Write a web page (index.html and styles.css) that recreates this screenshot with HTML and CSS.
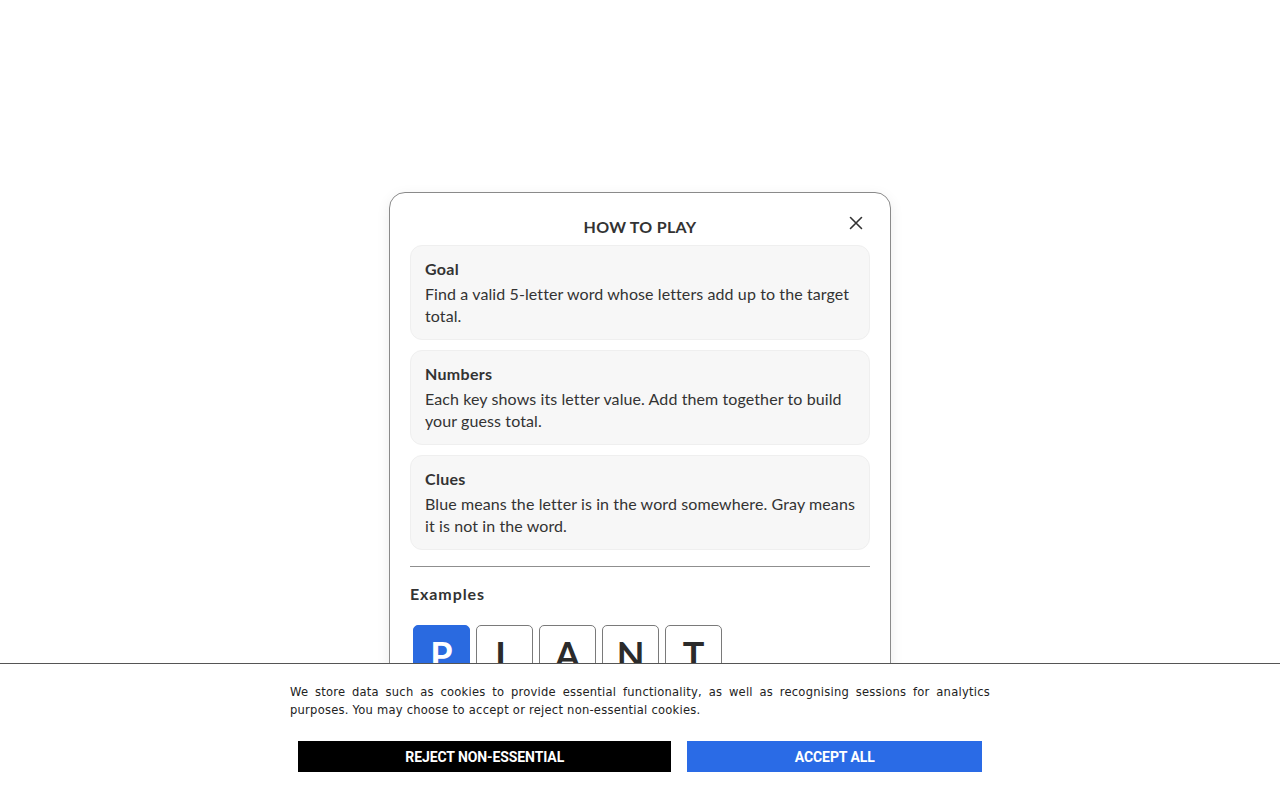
FILE: index.html
```html
<!doctype html>
<html lang="en">
  <head>
    <meta charset="UTF-8" />
    <meta name="viewport" content="width=device-width, initial-scale=1.0" />
    <title>How to play</title>
    <link rel="stylesheet" href="styles.css">
  </head>
  <body>
    <div class="modal">
      <div class="modalHeader">
        <h2 class="title">HOW TO PLAY</h2>
        <button class="close" aria-label="Close">
          <svg width="14" height="14" viewBox="0 0 14 14">
            <path d="M1.5 1.5 L12.5 12.5 M12.5 1.5 L1.5 12.5" stroke="#333" stroke-width="1.6" stroke-linecap="round" fill="none" />
          </svg>
        </button>
      </div>
      <div class="card">
        <div class="cardTitle">Goal</div>
        <p class="cardText">Find a valid 5-letter word whose letters add up to the target total.</p>
      </div>
      <div class="card">
        <div class="cardTitle">Numbers</div>
        <p class="cardText">Each key shows its letter value. Add them together to build your guess total.</p>
      </div>
      <div class="card">
        <div class="cardTitle">Clues</div>
        <p class="cardText">Blue means the letter is in the word somewhere. Gray means it is not in the word.</p>
      </div>
      <hr class="divider" />
      <div class="examplesTitle">Examples</div>
      <div class="tiles">
        <div class="tile blue">P</div>
        <div class="tile">L</div>
        <div class="tile">A</div>
        <div class="tile">N</div>
        <div class="tile">T</div>
      </div>
      <p class="exampleText">P is in the word somewhere.</p>
      <div class="tiles">
        <div class="tile">C</div>
        <div class="tile">R</div>
        <div class="tile gray">A</div>
        <div class="tile">N</div>
        <div class="tile">E</div>
      </div>
      <p class="exampleText">A is not in the word.</p>
    </div>

    <div class="cookies">
      <p class="cookieText">We store data such as cookies to provide essential functionality, as well as recognising sessions for analytics purposes. You may choose to accept or reject non-essential cookies.</p>
      <div class="cookieButtons">
        <button class="cookieBtn reject">REJECT NON-ESSENTIAL</button>
        <button class="cookieBtn accept">ACCEPT ALL</button>
      </div>
    </div>
  </body>
</html>
```

FILE: styles.css
```css
body {
  margin: 0;
  padding: 192px 0 40px;
  display: flex;
  flex-direction: column;
  align-items: center;
  background-color: #ffffff;
  font-family: "Lato", "Noto Sans", sans-serif;
  color: #333333;
}

.modal {
  width: 460px;
  padding: 20px;
  border: 1px solid #8a8a8a;
  border-radius: 16px;
  background: #ffffff;
  box-shadow: 0 4px 14px rgba(0, 0, 0, 0.08);
  display: flex;
  flex-direction: column;
}

.modalHeader {
  position: relative;
  height: 28px;
  margin-bottom: 4px;
}

.title {
  margin: 0;
  font-size: 16px;
  line-height: 28px;
  font-weight: 700;
  text-align: center;
  letter-spacing: 0.3px;
}

.close {
  position: absolute;
  right: 6px;
  top: 2px;
  width: 16px;
  height: 16px;
  padding: 0;
  border: none;
  background: none;
  display: flex;
  align-items: center;
  justify-content: center;
  cursor: pointer;
}

.card {
  background: #f7f7f7;
  border: 1px solid #efefef;
  border-radius: 12px;
  padding: 12px 14px;
}

.card + .card {
  margin-top: 10px;
}

.cardTitle {
  font-size: 16px;
  line-height: 22px;
  font-weight: 700;
  letter-spacing: 0.3px;
}

.cardText {
  margin: 3px 0 0;
  font-size: 16px;
  line-height: 22px;
  letter-spacing: 0.1px;
}

.divider {
  width: 100%;
  margin: 16px 0 0;
  border: none;
  border-top: 1px solid #8f8f8f;
}

.examplesTitle {
  margin-top: 16px;
  font-size: 16px;
  line-height: 22px;
  font-weight: 700;
  letter-spacing: 0.9px;
}

.tiles {
  display: flex;
  gap: 6px;
  margin: 20px 0 0 3px;
}

.tile {
  width: 55px;
  height: 55px;
  border: 1px solid #7a7a7a;
  border-radius: 5px;
  display: flex;
  align-items: center;
  justify-content: center;
  font-size: 36px;
  font-weight: 700;
  color: #2b2b2b;
}

.tile.blue {
  background: #2a6ae0;
  border-color: #2a6ae0;
  color: #ffffff;
}

.tile.gray {
  background: #8c8c8c;
  border-color: #8c8c8c;
  color: #ffffff;
}

.exampleText {
  margin: 10px 0 0;
  font-size: 16px;
  line-height: 22px;
}

.cookies {
  position: fixed;
  left: 0;
  right: 0;
  bottom: 0;
  height: 136px;
  background: #ffffff;
  border-top: 1px solid #555555;
  display: flex;
  flex-direction: column;
  align-items: center;
}

.cookieText {
  width: 700px;
  margin: 19px 0 0;
  font-family: "DejaVu Sans Condensed", "DejaVu Sans", sans-serif;
  font-size: 12.8px;
  line-height: 18px;
  letter-spacing: 0.25px;
  text-align: justify;
  color: #222222;
}

.cookieButtons {
  width: 684px;
  margin-top: 22px;
  display: flex;
  gap: 16px;
}

.cookieBtn {
  flex: 1 1 auto;
  height: 31px;
  border: none;
  color: #ffffff;
  font-family: "Roboto", "Liberation Sans", sans-serif;
  font-size: 14px;
  font-weight: 700;
  letter-spacing: -0.1px;
  cursor: pointer;
}

.reject {
  background: #000000;
}

.accept {
  background: #2a6be6;
}
```
